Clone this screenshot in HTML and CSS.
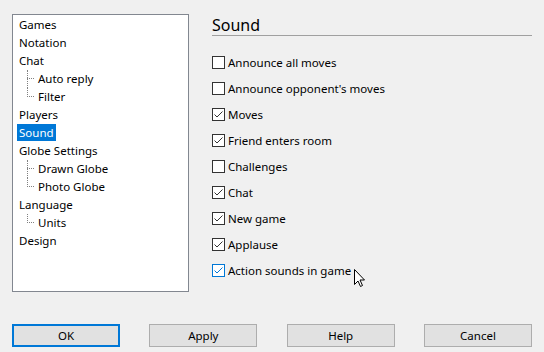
FILE: index.html
```html
<!DOCTYPE html>
<html lang="en">
<head>
  <meta charset="UTF-8" />
  <title>Options - Sound</title>
  <link rel="stylesheet" href="styles.css">
</head>
<body>

  <div class="dialog">
    <!-- Category tree -->
    <ul class="tree">
      <li class="node">Games</li>
      <li class="node">Notation</li>
      <li class="node">Chat</li>
      <li class="node child">Auto reply</li>
      <li class="node child last">Filter</li>
      <li class="node">Players</li>
      <li class="node"><span class="selected">Sound</span></li>
      <li class="node">Globe Settings</li>
      <li class="node child">Drawn Globe</li>
      <li class="node child last">Photo Globe</li>
      <li class="node">Language</li>
      <li class="node child last">Units</li>
      <li class="node">Design</li>
    </ul>

    <!-- Settings page -->
    <div class="page">
      <h2>Sound</h2>
      <div class="options">
        <label class="option"><span class="box"></span>Announce all moves</label>
        <label class="option"><span class="box"></span>Announce opponent's moves</label>
        <label class="option checked"><span class="box"><svg viewBox="0 0 11 11"><path d="M1.5 5.5 L4 8 L9.5 2.5"/></svg></span>Moves</label>
        <label class="option checked"><span class="box"><svg viewBox="0 0 11 11"><path d="M1.5 5.5 L4 8 L9.5 2.5"/></svg></span>Friend enters room</label>
        <label class="option"><span class="box"></span>Challenges</label>
        <label class="option checked"><span class="box"><svg viewBox="0 0 11 11"><path d="M1.5 5.5 L4 8 L9.5 2.5"/></svg></span>Chat</label>
        <label class="option checked"><span class="box"><svg viewBox="0 0 11 11"><path d="M1.5 5.5 L4 8 L9.5 2.5"/></svg></span>New game</label>
        <label class="option checked"><span class="box"><svg viewBox="0 0 11 11"><path d="M1.5 5.5 L4 8 L9.5 2.5"/></svg></span>Applause</label>
        <label class="option checked hover"><span class="box"><svg viewBox="0 0 11 11"><path d="M1.5 5.5 L4 8 L9.5 2.5"/></svg></span>Action sounds in game</label>
      </div>
    </div>
  </div>

  <div class="buttons">
    <button class="default">OK</button>
    <button>Apply</button>
    <button>Help</button>
    <button>Cancel</button>
  </div>

  <!-- mouse pointer -->
  <svg class="cursor" width="12" height="19" viewBox="0 0 12 19">
    <path d="M0.5 0.5 L0.5 15.5 L4 12 L6.5 17.5 L8.5 16.5 L6 11 L10.5 11 Z" fill="#fff" stroke="#000" stroke-width="1" stroke-linejoin="miter"/>
  </svg>

</body>
</html>
```

FILE: styles.css
```css
body {
  margin: 0;
  width: 544px;
  height: 352px;
  background-color: #f0f0f0;
  font-family: 'Noto Sans', 'Open Sans', sans-serif;
  font-size: 11.5px;
  color: #000;
  position: relative;
  overflow: hidden;
}

.dialog {
  display: flex;
  padding: 14px 12px 0 12px;
}

/* Tree */

.tree {
  list-style: none;
  margin: 0;
  padding: 1px 0 0 4px;
  width: 171px;
  height: 275px;
  background: white;
  border: 1px solid #828790;
}

.node {
  position: relative;
  height: 18px;
  line-height: 17px;
  padding-left: 2px;
}

.node.child {
  padding-left: 21px;
}

.node.child::before {
  content: '';
  position: absolute;
  left: 10px;
  top: 8px;
  width: 7px;
  border-top: 1px dotted #808080;
}

.node.child::after {
  content: '';
  position: absolute;
  left: 10px;
  top: 0;
  height: 18px;
  border-left: 1px dotted #808080;
}

.node.child.last::after {
  height: 9px;
}

.selected {
  display: inline-block;
  background: #0078d7;
  color: white;
  margin-left: -2px;
  padding: 0 2px;
  height: 17px;
}

/* Page */

.page {
  margin-left: 23px;
  width: 320px;
}

h2 {
  margin: 0;
  font-weight: normal;
  font-size: 16px;
  line-height: 20px;
  padding-top: 1px;
  border-bottom: 1px solid #a0a0a0;
  height: 20px;
}

.options {
  display: flex;
  flex-direction: column;
  padding-top: 13px;
}

.option {
  display: flex;
  align-items: center;
  gap: 3px;
  height: 26px;
}

.box {
  box-sizing: border-box;
  width: 13px;
  height: 13px;
  border: 1px solid #333;
  background: white;
  display: flex;
  align-items: center;
  justify-content: center;
}

.box svg {
  width: 11px;
  height: 11px;
  fill: none;
  stroke: #333;
  stroke-width: 1;
}

.option.hover .box {
  border-color: #0078d7;
}

.option.hover .box svg {
  stroke: #0078d7;
}

/* Buttons */

.buttons {
  display: flex;
  justify-content: space-between;
  padding: 0 12px;
  margin-top: 32px;
}

.buttons button {
  box-sizing: border-box;
  width: 108px;
  height: 23px;
  background: #e1e1e1;
  border: 1px solid #adadad;
  font-family: inherit;
  font-size: 11.5px;
  color: #000;
  padding: 0;
}

.buttons button.default {
  border: 2px solid #0078d7;
}

.cursor {
  position: absolute;
  left: 354px;
  top: 269px;
}
```
